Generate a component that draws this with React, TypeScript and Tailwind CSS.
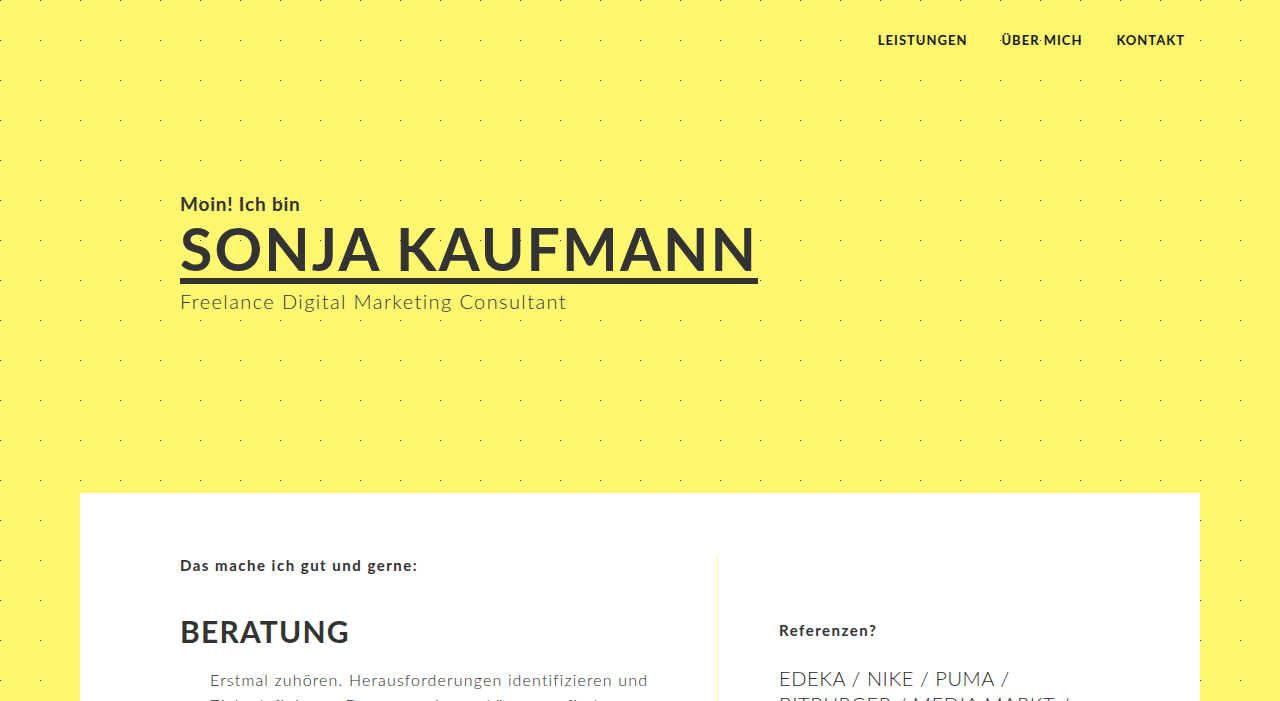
import React from 'react';

const navItems = ['Leistungen', 'Über mich', 'Kontakt'];

const App = () => {
  return (
    <div
      className="min-h-[701px] bg-[#fff770] bg-[radial-gradient(circle_at_0.5px_0.5px,#3a3a2a_0.8px,transparent_1px)] bg-[size:40px_40px] text-[#333] overflow-hidden"
      style={{ fontFamily: 'Lato, "Noto Sans", sans-serif' }}
    >
      {/* Header */}
      <header className="flex justify-end pt-[32px] pr-[95px]">
        <nav className="flex gap-[34px]">
          {navItems.map((item) => (
            <a
              key={item}
              href="#"
              className="text-[13px] font-bold uppercase tracking-[1px] text-[#1a1a1a] leading-[16px]"
            >
              {item}
            </a>
          ))}
        </nav>
      </header>

      {/* Hero */}
      <section className="pl-[180px] pt-[144px] h-[445px]">
        <p className="text-[19px] font-bold tracking-[0.8px] leading-[24px]">Moin! Ich bin</p>
        <h1 className="mt-[4px] inline-block border-b-[6px] border-[#333] text-[59px] font-bold uppercase tracking-[2.1px] leading-[58px]">
          Sonja Kaufmann
        </h1>
        <p className="mt-[4px] text-[20px] font-light tracking-[1.4px] leading-[26px]">
          Freelance Digital Marketing Consultant
        </p>
      </section>

      {/* Card */}
      <main className="mx-[80px] bg-white pt-[62px] h-[300px]">
        <div className="flex">
          <div className="w-[638px] pl-[100px] pr-[40px] border-r border-[#fff3a0]">
            <h3 className="text-[15px] font-bold tracking-[1.5px] leading-[20px]">
              Das mache ich gut und gerne:
            </h3>
            <h2 className="mt-[38px] text-[30px] font-bold uppercase tracking-[1.2px] leading-[36px]">
              Beratung
            </h2>
            <p className="mt-[18px] pl-[30px] text-[16px] font-light text-[#2a2a2a] tracking-[1.15px] leading-[25px]">
              Erstmal zuhören. Herausforderungen identifizieren und Ziele definieren. Dann gemeinsam Lösungen finden.
            </p>
          </div>
          <div className="pl-[61px] pt-[65px]">
            <h3 className="text-[15px] font-bold tracking-[1.5px] leading-[20px]">Referenzen?</h3>
            <p className="mt-[25px] w-[300px] text-[20px] font-light text-[#2a2a2a] uppercase tracking-[0.6px] leading-[26px]">
              Edeka / Nike / Puma / Bitburger / Media Markt / Otto
            </p>
          </div>
        </div>
      </main>
    </div>
  );
};

export default App;
